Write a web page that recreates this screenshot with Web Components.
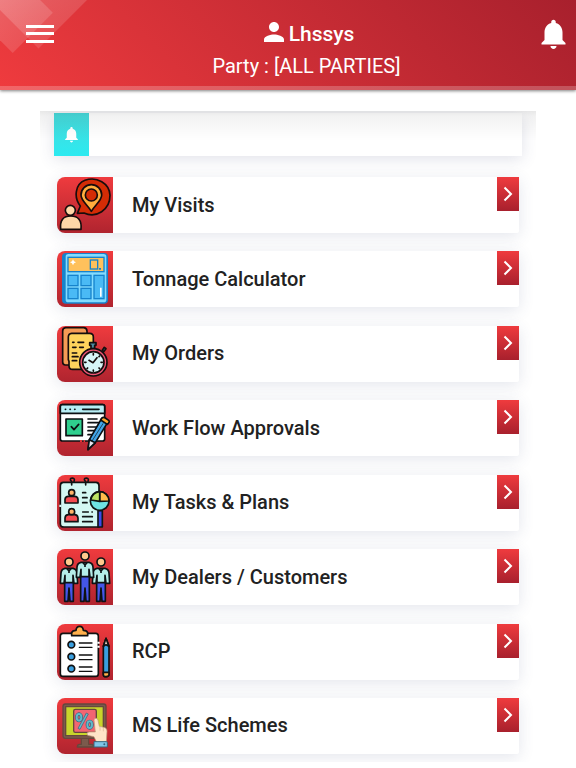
<!DOCTYPE html>
<html lang="en">
<head>
<meta charset="utf-8">
<meta name="viewport" content="width=device-width, initial-scale=1">
<title>Lhssys</title>
<style>
    body {
        margin: 0;
        background: #fff;
        color: #222;
        font-family: Roboto, "Liberation Sans", sans-serif;
        font-size: 20px;
    }
</style>
</head>
<body>
<home-page>
    <app-header slot="header">
        <span slot="user">Lhssys</span>
        <span slot="party">Party : [ALL PARTIES]</span>
    </app-header>
    <notice-bar></notice-bar>
    <menu-list>
        <menu-card icon="visits">My Visits</menu-card>
        <menu-card icon="calculator">Tonnage Calculator</menu-card>
        <menu-card icon="orders">My Orders</menu-card>
        <menu-card icon="approvals">Work Flow Approvals</menu-card>
        <menu-card icon="tasks">My Tasks &amp; Plans</menu-card>
        <menu-card icon="dealers">My Dealers / Customers</menu-card>
        <menu-card icon="rcp">RCP</menu-card>
        <menu-card icon="schemes">MS Life Schemes</menu-card>
    </menu-list>
</home-page>

<script>
const BELL = `<path d="M12 22c1.1 0 2-.9 2-2h-4c0 1.1.9 2 2 2zm6-6v-5c0-3.07-1.63-5.64-4.5-6.32V4c0-.83-.67-1.5-1.5-1.5s-1.5.67-1.5 1.5v.68C7.64 5.36 6 7.92 6 11v5l-2 2v1h16v-1l-2-2z" fill="#fff"/>`;

// one customer figure, reused three times in the dealers icon
const person = (x, y, feet) => `
    <circle cx="${x}" cy="${y}" r="12" fill="#ffc98d"/>
    <path d="M${x - 13} ${y + 40}h26V${feet}h-10l-3-40-3 40h-10z" fill="#4456e8"/>
    <path d="M${x - 12} ${y + 19}h24q11 2 12 14l2 31h-11l-3-24v22h-24v-22l-3 24h-11l2-31q1-12 12-14z" fill="#b5eee9"/>
    <path d="M${x - 6} ${y + 20}l6 7 6-7M${x} ${y + 28}v5" fill="none"/>`;

// icons are drawn on a 168 unit square that starts at 21,21
const ICONS = {
    visits: `
        <g stroke="#180c0c" stroke-width="5" stroke-linejoin="round">
            <path d="M82 130l9-22C70 82 76 42 105 31c35-13 74 9 75 45 0 44-41 70-78 53z" fill="#d42c05"/>
            <path d="M124 124c-12-20-31-32-31-49a31 31 0 0 1 62 0c0 17-19 29-31 49z" fill="#ffad3d"/>
            <circle cx="124" cy="75" r="18" fill="#d42c05"/>
            <path d="M32 178c-3-28 8-40 30-40s34 12 31 40z" fill="#ffd7a8"/>
            <circle cx="61" cy="121" r="15" fill="#ffd7a8"/>
        </g>`,
    calculator: `
        <rect x="36" y="27" width="138" height="152" rx="12" fill="#1683cc"/>
        <rect x="47" y="30" width="122" height="145" rx="8" fill="#84dcff"/>
        <g fill="#4abaf5" stroke="#1683cc" stroke-width="4">
            <rect x="54" y="40" width="108" height="43" fill="#ffc15c"/>
            <rect x="121" y="48" width="22" height="27" fill="none"/>
            <rect x="54" y="94" width="30" height="31"/>
            <rect x="93" y="94" width="30" height="31"/>
            <rect x="54" y="133" width="30" height="31"/>
            <rect x="93" y="133" width="30" height="31"/>
            <rect x="132" y="94" width="30" height="70"/>
        </g>
        <path d="M147 72h6v5h-6zM37 157h6v6h-6z" fill="#1683cc"/>
        <path d="M69 46l3 6 6 3-6 3-3 6-3-6-6-3 6-3zM150 131h5v27h-5z" fill="#fff"/>`,
    orders: `
        <g stroke="#150d0d" stroke-width="5" stroke-linejoin="round" stroke-linecap="round">
            <path d="M47 26h54q9 0 10 10v102H46q-8 0-8-9V36q0-9 9-10z" fill="#f59a55"/>
            <path d="M65 43h54q11 0 11 11v97H68q-11 0-11-11v-13l-2-5V54q0-10 10-11z" fill="#ffd35c"/>
            <path d="M68 70h4M84 70h17M68 85h10M89 85h11M67 102h13M67 113h17M67 125h13" fill="none"/>
            <path d="M119 71h19v8h-4v10h-11V79h-4zM157 94l6-9 5 4-7 9z" fill="#4b8ca0"/>
            <circle cx="130" cy="130" r="41" fill="#ef5675"/>
            <circle cx="130" cy="130" r="32" fill="#d6f5f8"/>
            <path d="M117 124l12 7 12-15M130 104v4M130 153v4M104 130h4M153 130h4M111 149l2-2M149 149l-2-2M149 111l-2 2" fill="none"/>
        </g>`,
    approvals: `
        <g stroke="#0c1013" stroke-width="5" stroke-linejoin="round" stroke-linecap="round">
            <rect x="31" y="35" width="133" height="109" rx="6" fill="#fff"/>
            <path d="M37 35h121q6 0 6 6v20H31V41q0-6 6-6z" fill="#b7eef5"/>
            <path d="M46 49h1M60 49h1M74 49h1M98 49h49M114 78h27M114 89h37M114 102h27M114 113h18M114 125h16" fill="none"/>
            <rect x="48" y="78" width="49" height="50" fill="#2fcf8e"/>
            <path d="M64 101l8 9 14-16" fill="none"/>
            <path d="M155 76l18 12-37 61-22 21 4-30z" fill="#42a5e8"/>
            <path d="M155 76q5-5 11-1l10 7q4 3-1 9l-3 3-20-13z" fill="#ffa629"/>
            <path d="M118 140l18 9-22 21z" fill="#e8e4ee"/>
            <path d="M150 86l-31 53 7 5 33-52" fill="none" stroke-width="2"/>
        </g>
        <path d="M90 141h6v6h-6zM101 141h4v6h-4z" fill="#e03237"/>`,
    tasks: `
        <g stroke="#101414" stroke-width="5" stroke-linejoin="round" stroke-linecap="round">
            <path d="M40 43h98q9 0 9 10v124H42q-11 0-11-10V53q0-10 9-10z" fill="#d4f8f3"/>
            <path d="M65 51V41q-9-10 2-11 9 1 5 10M107 51V41q-9-10 2-11 9 1 5 10" fill="none"/>
            <path d="M45 105V94q1-9 10-9h19q9 0 10 9v11zM45 161v-11q1-10 10-10h19q9 0 10 10v11z" fill="#f44b50"/>
            <circle cx="65" cy="74" r="9" fill="#ffb46a"/>
            <circle cx="65" cy="131" r="9" fill="#ffb46a"/>
            <path d="M98 74h9M98 89h13M98 104h13M98 132h17M126 132h1M98 146h29M98 161h29" fill="none"/>
            <path d="M144 128h13v49h-13z" fill="#3c4be8"/>
            <circle cx="149" cy="99" r="28" fill="#6ee3e4"/>
            <path d="M149 71a28 28 0 0 1 28 28l-28 1z" fill="#ffbc4b"/>
            <path d="M149 71v29l-27-4q5-23 27-25z" fill="#bde565"/>
        </g>
        <path d="M28 110h6v7h-6z" fill="#d4f8f3"/>`,
    dealers: `
        <g stroke="#0d1214" stroke-width="5" stroke-linejoin="round">
            ${person(57, 60, 178)}
            ${person(153, 60, 178)}
            ${person(105, 42, 178)}
        </g>`,
    rcp: `
        <g stroke="#111" stroke-width="5" stroke-linejoin="round" stroke-linecap="round">
            <rect x="31" y="49" width="114" height="129" rx="8" fill="#fff"/>
            <path d="M65 56V47q2-7 13-7 1-12 11-12t11 12q11 0 13 7v9z" fill="#ffb04c"/>
            <path d="M88 78h38M88 91h38M88 114h38M88 128h38M88 150h38M88 163h38" fill="none" stroke-width="4"/>
            <g fill="#3a9fdf">
                <circle cx="64" cy="83" r="10"/>
                <circle cx="64" cy="119" r="10"/>
                <circle cx="64" cy="155" r="10"/>
            </g>
            <path d="M160 88l8-24 9 24v83q0 8-9 8-8 0-8-8z" fill="#3a9fdf"/>
            <path d="M160 166h17v7q-1 6-9 6t-8-6z" fill="#ffb04c"/>
            <path d="M160 88l8-24 9 24-9-5z" fill="#f3ded0"/>
        </g>
        <path d="M142 74h7v6h-7zM142 86h7v6h-7z" fill="#fff"/>`,
    schemes: `
        <g stroke="#66483d" stroke-width="4" stroke-linejoin="round">
            <path d="M94 141h22v19h8q7 0 7 8H82q0-8 7-8h5z" fill="#7b5a4c"/>
            <rect x="39" y="39" width="129" height="103" rx="7" fill="#7b5a4c"/>
            <rect x="47" y="47" width="113" height="87" fill="#c8d52b"/>
            <rect x="71" y="55" width="68" height="69" rx="5" fill="#f26672"/>
        </g>
        <path d="M109 66l6 3-25 46-6-3z" fill="#62b8c9" stroke="#34637a" stroke-width="2"/>
        <g fill="none" stroke="#34637a" stroke-width="10">
            <ellipse cx="87" cy="79" rx="7" ry="10"/>
            <ellipse cx="119" cy="101" rx="7" ry="10"/>
        </g>
        <g fill="none" stroke="#62b8c9" stroke-width="6">
            <ellipse cx="87" cy="79" rx="7" ry="10"/>
            <ellipse cx="119" cy="101" rx="7" ry="10"/>
        </g>
        <path d="M132 87q1-6 7-5 4 1 5 6l4 18 17 4q6 2 6 10l-2 34h-29l-8-17-19-4q-6-8 4-10h19z" fill="#ffe5c8" stroke="#c39b7a" stroke-width="2"/>
        <path d="M150 107v12M160 110v11" stroke="#d9b692" stroke-width="2"/>
        <path d="M132 152h37q3 0 3 3v13h-40z" fill="#7fc5e8" stroke="#35667d" stroke-width="3"/>
        <circle cx="163" cy="160" r="3" fill="#35667d"/>`
};

class HomePage extends HTMLElement {
    constructor() {
        super();
        this.attachShadow({ mode: "open" });
    }
    connectedCallback() {
        this.shadowRoot.innerHTML = `
            <style>
                :host {
                    display: flex;
                    flex-direction: column;
                    min-height: 100vh;
                }
                main {
                    position: relative;
                    flex: 1;
                    display: flex;
                    flex-direction: column;
                    box-sizing: border-box;
                    margin: 21px 40px 6px;
                    padding: 2px 14px 8px;
                    overflow: hidden;
                }
                /* shade that falls over the top of the scroll area */
                main::before {
                    content: "";
                    position: absolute;
                    inset: 0 0 auto;
                    z-index: 1;
                    height: 30px;
                    background: linear-gradient(rgba(0, 0, 0, .09), rgba(0, 0, 0, .05) 5px, transparent);
                    pointer-events: none;
                }
            </style>
            <slot name="header"></slot>
            <main><slot></slot></main>
        `;
    }
}
window.customElements.define("home-page", HomePage);

class AppHeader extends HTMLElement {
    constructor() {
        super();
        this.attachShadow({ mode: "open" });
    }
    connectedCallback() {
        this.shadowRoot.innerHTML = `
            <style>
                :host {
                    display: block;
                    color: #fff;
                }
                header {
                    position: relative;
                    display: flex;
                    align-items: flex-start;
                    box-sizing: border-box;
                    padding: 16px 4px 4px 22px;
                    border-bottom: 4px solid rgba(255, 255, 255, .22);
                    background: linear-gradient(45deg, #ef3b3e, #a8202d) border-box;
                    box-shadow: 0 1px 3px rgba(0, 0, 0, .5);
                }
                .pattern {
                    position: absolute;
                    top: 0;
                    left: 0;
                }
                button {
                    display: flex;
                    position: relative;
                    padding: 0;
                    border: none;
                    background: none;
                    cursor: pointer;
                }
                .titles {
                    flex: 1;
                    display: flex;
                    flex-direction: column;
                    align-items: center;
                    padding: 2px 0 0 20px;
                    line-height: 32px;
                }
                .user {
                    display: flex;
                    align-items: center;
                    font-size: 21px;
                    font-weight: 500;
                }
                .user svg {
                    margin-top: -4px;
                }
            </style>
            <header>
                <svg class="pattern" width="87" height="53" viewBox="0 0 260 158" aria-hidden="true">
                    <defs>
                        <linearGradient id="fade" x1="0" y1="0" x2="1" y2="1">
                            <stop offset="0" stop-color="#fff" stop-opacity=".2"/>
                            <stop offset="1" stop-color="#fff" stop-opacity=".09"/>
                        </linearGradient>
                    </defs>
                    <path d="M0 0h120l38 38L38 158 0 120z" fill="url(#fade)"/>
                    <path d="M0 0h260L115 145 0 30z" fill="url(#fade)"/>
                </svg>
                <button aria-label="Menu">
                    <svg width="36" height="36" viewBox="0 0 36 36">
                        <path d="M4 9h28v3H4zM4 16h28v3H4zM4 24h28v3H4z" fill="#fff"/>
                    </svg>
                </button>
                <div class="titles">
                    <div class="user">
                        <svg width="30" height="30" viewBox="0 0 24 24" aria-hidden="true">
                            <path d="M12 12c2.2 0 4-1.8 4-4s-1.8-4-4-4-4 1.8-4 4 1.8 4 4 4zm0 2c-2.7 0-8 1.3-8 4v2h16v-2c0-2.7-5.3-4-8-4z" fill="#fff"/>
                        </svg>
                        <slot name="user"></slot>
                    </div>
                    <slot name="party"></slot>
                </div>
                <button aria-label="Notifications">
                    <svg width="37" height="36" viewBox="0 0 24 24">${BELL}</svg>
                </button>
            </header>
        `;
    }
}
window.customElements.define("app-header", AppHeader);

class NoticeBar extends HTMLElement {
    constructor() {
        super();
        this.attachShadow({ mode: "open" });
    }
    connectedCallback() {
        this.shadowRoot.innerHTML = `
            <style>
                :host {
                    display: flex;
                    background: #fff;
                    box-shadow: 0 3px 16px rgba(60, 70, 120, .16);
                }
                .tile {
                    display: flex;
                    align-items: center;
                    justify-content: center;
                    width: 35px;
                    height: 43px;
                    background: linear-gradient(#48d9da, #2ceaf0);
                }
            </style>
            <div class="tile">
                <svg width="19" height="19" viewBox="0 0 24 24" aria-hidden="true">${BELL}</svg>
            </div>
        `;
    }
}
window.customElements.define("notice-bar", NoticeBar);

class MenuList extends HTMLElement {
    constructor() {
        super();
        this.attachShadow({ mode: "open" });
    }
    connectedCallback() {
        this.shadowRoot.innerHTML = `
            <style>
                :host {
                    flex: 1;
                    display: flex;
                    flex-direction: column;
                }
                nav {
                    flex: 1;
                    display: flex;
                    flex-direction: column;
                    justify-content: space-between;
                    gap: 16px;
                    margin: 21px 3px 0;
                }
            </style>
            <nav><slot></slot></nav>
        `;
    }
}
window.customElements.define("menu-list", MenuList);

class MenuCard extends HTMLElement {
    constructor() {
        super();
        this.attachShadow({ mode: "open" });
    }
    connectedCallback() {
        const icon = ICONS[this.getAttribute("icon")];
        this.shadowRoot.innerHTML = `
            <style>
                :host {
                    display: block;
                }
                a {
                    display: flex;
                    align-items: center;
                    border-radius: 8px 2px 2px 8px;
                    background: #fff;
                    box-shadow: 0 3px 16px rgba(60, 70, 120, .14);
                    color: inherit;
                    text-decoration: none;
                }
                .icon {
                    display: flex;
                    flex: none;
                    border-radius: 8px 0 0 8px;
                    overflow: hidden;
                    background: linear-gradient(#ef3b3e, #b0242f);
                }
                .label {
                    flex: 1;
                    padding: 0 19px 1px;
                    font-weight: 500;
                    line-height: 24px;
                }
                .go {
                    display: flex;
                    align-self: flex-start;
                    align-items: center;
                    justify-content: center;
                    width: 22px;
                    height: 34px;
                    background: linear-gradient(#ef3b3e, #a8202d);
                }
            </style>
            <a href="#${this.getAttribute("icon")}">
                <span class="icon">
                    <svg width="56" height="56" viewBox="21 21 168 168" aria-hidden="true">${icon}</svg>
                </span>
                <span class="label"><slot></slot></span>
                <span class="go">
                    <svg width="10" height="16" viewBox="0 0 10 16" aria-hidden="true">
                        <path d="M1.5 1.5L8 8l-6.5 6.5" fill="none" stroke="#fff" stroke-width="2"/>
                    </svg>
                </span>
            </a>
        `;
    }
}
window.customElements.define("menu-card", MenuCard);
</script>
</body>
</html>
